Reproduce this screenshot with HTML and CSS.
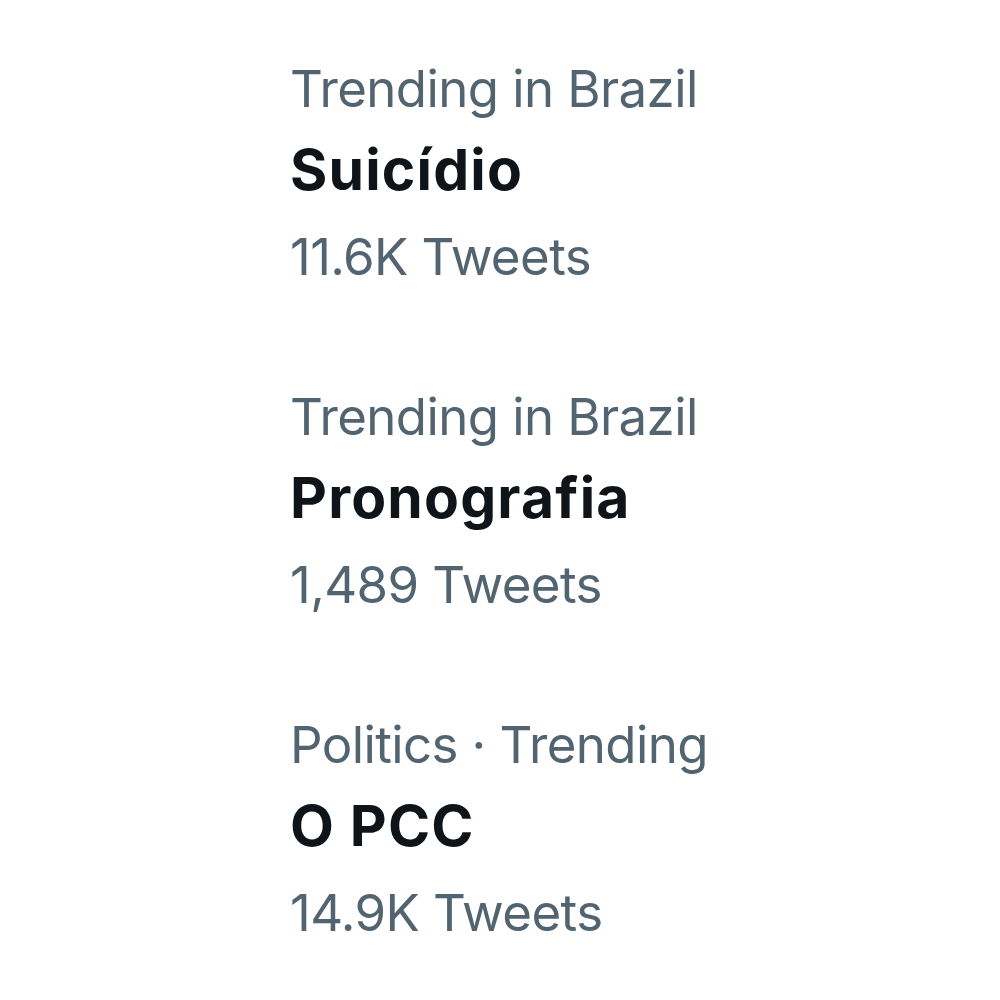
FILE: index.html
```html
<!DOCTYPE html>
<html>
<head>
<meta charset="utf-8">
<link rel="stylesheet" href="styles.css">
</head>
<body>
<div class="trends">
  <div class="trend">
    <div class="meta">Trending in Brazil</div>
    <div class="title">Suicídio</div>
    <div class="meta">11.6K Tweets</div>
  </div>
  <div class="trend">
    <div class="meta">Trending in Brazil</div>
    <div class="title">Pronografia</div>
    <div class="meta">1,489 Tweets</div>
  </div>
  <div class="trend">
    <div class="meta">Politics · Trending</div>
    <div class="title">O PCC</div>
    <div class="meta">14.9K Tweets</div>
  </div>
</div>
</body>
</html>
```
FILE: styles.css
```css
html, body {
  margin: 0;
  padding: 0;
  background: #ffffff;
}
.trends {
  display: flex;
  flex-direction: column;
  gap: 77px;
  padding: 47px 0 0 290px;
  font-family: Inter, "Noto Sans", sans-serif;
}
.trend {
  display: flex;
  flex-direction: column;
}
.meta {
  color: #536471;
  font-size: 51px;
  letter-spacing: -0.6px;
  line-height: 83px;
  height: 83px;
}
.title {
  color: #0f1419;
  font-size: 57px;
  font-weight: 700;
  letter-spacing: 1.2px;
  line-height: 79px;
  height: 79px;
  margin-bottom: 6px;
}
```
